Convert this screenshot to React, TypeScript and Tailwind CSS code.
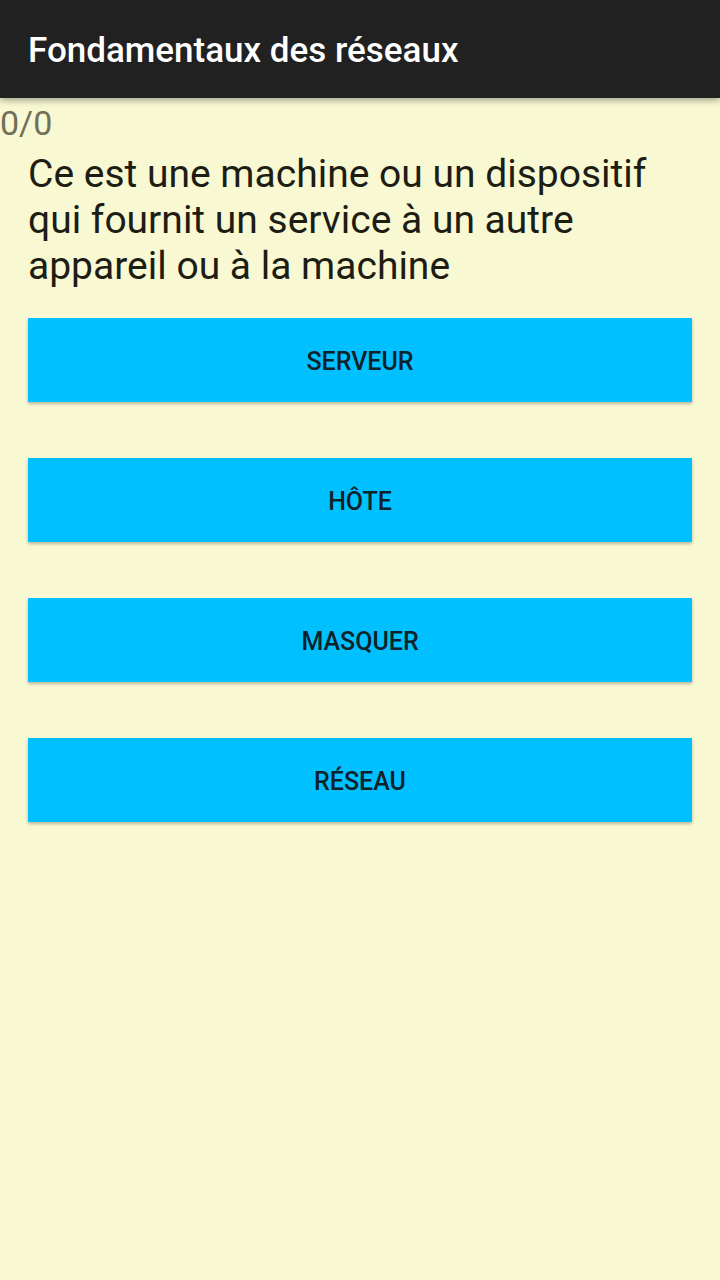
import React from "react";

const answers = ["SERVEUR", "HÔTE", "MASQUER", "RÉSEAU"];

export default function App() {
  return (
    <div
      className="w-[720px] h-[1280px] bg-[#f8f8d3] flex flex-col overflow-hidden"
      style={{ fontFamily: "Roboto, 'Liberation Sans', sans-serif" }}
    >
      <div className="h-[98px] bg-[#212121] flex items-center pl-[28px] shadow-[0_3px_6px_rgba(0,0,0,0.3)] relative z-10 shrink-0">
        <h1 className="text-white text-[35px] font-medium leading-none mt-[2px]">Fondamentaux des réseaux</h1>
      </div>
      <div className="text-[#707058] text-[34px] leading-[40px] mt-[5px]">0/0</div>
      <div className="px-[28px]">
        <p className="text-[#1d1d14] text-[39px] leading-[46px] mt-[8px]">
          Ce est une machine ou un dispositif qui fournit un service à un autre appareil ou à la machine
        </p>
        <div className="flex flex-col gap-[56px] mt-[29px]">
          {answers.map((a) => (
            <button
              key={a}
              className="h-[84px] w-full bg-[#00c0ff] text-[#0d2229] text-[25px] font-medium pt-[4px] shadow-[0_2px_3px_rgba(0,0,0,0.25)]"
            >
              {a}
            </button>
          ))}
        </div>
      </div>
    </div>
  );
}
